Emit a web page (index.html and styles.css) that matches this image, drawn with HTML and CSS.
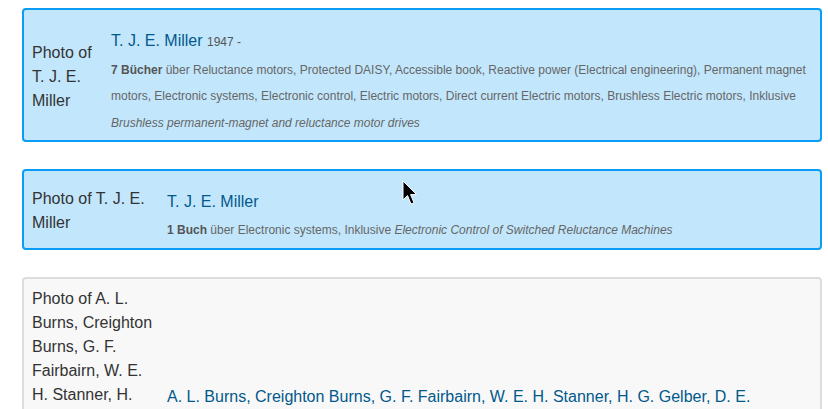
FILE: index.html
```html
<!DOCTYPE html>
<html lang="de">
<head>
<meta charset="utf-8">
<title>Autoren</title>
<link rel="stylesheet" href="styles.css">
</head>
<body>
<main class="page">
  <div class="card card-active">
    <div class="photo photo-narrow">Photo of T. J. E. Miller</div>
    <div class="info">
      <div class="title"><a href="#">T. J. E. Miller</a> <span class="dates">1947 -</span></div>
      <div class="details"><b>7 Bücher</b> über Reluctance motors, Protected DAISY, Accessible book, Reactive power (Electrical engineering), Permanent magnet motors, Electronic systems, Electronic control, Electric motors, Direct current Electric motors, Brushless Electric motors, Inklusive <i>Brushless permanent-magnet and reluctance motor drives</i></div>
    </div>
  </div>
  <div class="card card-active">
    <div class="photo">Photo of T. J. E. Miller</div>
    <div class="info">
      <div class="title"><a href="#">T. J. E. Miller</a></div>
      <div class="details"><b>1 Buch</b> über Electronic systems, Inklusive <i>Electronic Control of Switched Reluctance Machines</i></div>
    </div>
  </div>
  <div class="card">
    <div class="photo">Photo of A. L. Burns, Creighton Burns, G. F. Fairbairn, W. E. H. Stanner, H. G. Gelber, D. E. Charlesworth, J. D. B. Miller, Hedley Bull, T. B. Millar, K. C. Beazley</div>
    <div class="info">
      <div class="title"><a href="#">A. L. Burns, Creighton Burns, G. F. Fairbairn, W. E. H. Stanner, H. G. Gelber, D. E. Charlesworth, J. D. B. Miller, Hedley Bull, T. B. Millar, K. C. Beazley</a></div>
      <div class="details"><b>1 Buch</b> über Foreign relations, Inklusive <i>Australian Policy on Nuclear Weapons</i></div>
    </div>
  </div>
  <svg class="cursor" width="16" height="26" viewBox="0 0 16 26" aria-hidden="true">
    <path d="M1 1 L1 20 L5.5 15.5 L9 24 L12 22.8 L8.6 14.6 L14.6 14.6 Z" fill="#000" stroke="#fff" stroke-width="1" stroke-linejoin="round"/>
  </svg>
</main>
</body>
</html>
```
FILE: styles.css
```css
html, body {
  margin: 0;
  padding: 0;
  background: #fff;
}
body {
  font-family: "Liberation Sans", Arial, sans-serif;
  color: #333;
}
.page {
  position: relative;
  padding: 8px 6px 0 22px;
}
.card {
  display: flex;
  align-items: center;
  border: 2px solid #ddd;
  background: #f8f8f8;
  border-radius: 4px;
  padding: 4px 8px;
  margin-bottom: 27px;
}
.card-active {
  border-color: #0a9df5;
  background: #c2e6fc;
}
.photo {
  flex: 0 0 121px;
  width: 121px;
  padding-top: 4px;
  font-size: 16px;
  line-height: 24px;
  color: #333;
}
.photo-narrow {
  flex-basis: 68px;
  width: 68px;
}
.photo-narrow + .info {
  margin-left: 11px;
}
.info {
  flex: 1 1 auto;
  min-width: 0;
  margin-left: 14px;
}
.title {
  margin-top: 15px;
  margin-bottom: 3px;
  font-size: 16px;
  line-height: 24px;
}
.title a {
  color: #02598b;
  text-decoration: none;
}
.dates {
  font-size: 12px;
  color: #555;
}
.details {
  font-size: 12px;
  line-height: 26.4px;
  color: #666;
}
.details b {
  color: #555;
}
.cursor {
  position: absolute;
  left: 402px;
  top: 180px;
}
```
